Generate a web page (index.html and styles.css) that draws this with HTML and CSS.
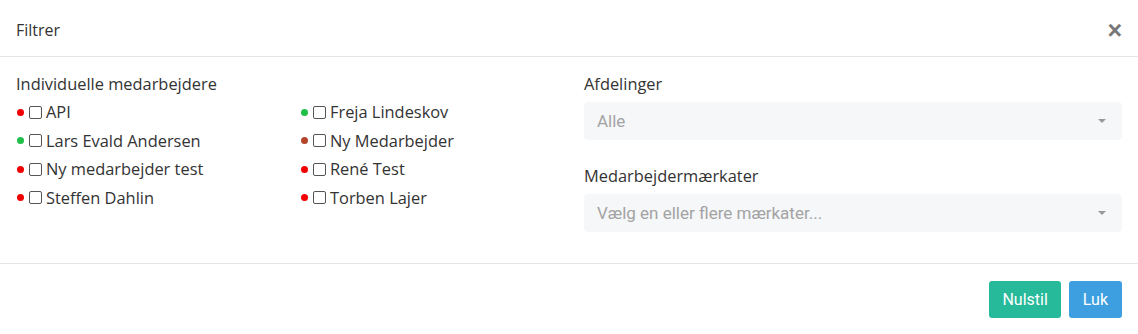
FILE: index.html
```html
<!DOCTYPE html>
<html lang="da">

<head>
  <meta charset="UTF-8">
  <meta name="viewport" content="width=device-width, initial-scale=1.0">
  <title>Filtrer</title>

  <link rel="stylesheet" href="styles.css">
</head>

<body>
  <div class="modal">
    <div class="modal__header">
      <h4 class="modal__title">Filtrer</h4>
      <button class="modal__close" type="button">&times;</button>
    </div>

    <div class="modal__body">
      <div class="filter__group filter__group--employees">
        <div class="filter__label">Individuelle medarbejdere</div>
        <div class="employee__list">
          <label class="employee"><span class="employee__dot dot--red"></span><input type="checkbox"> API</label>
          <label class="employee"><span class="employee__dot dot--green"></span><input type="checkbox"> Freja Lindeskov</label>
          <label class="employee"><span class="employee__dot dot--green"></span><input type="checkbox"> Lars Evald Andersen</label>
          <label class="employee"><span class="employee__dot dot--brown"></span><input type="checkbox"> Ny Medarbejder</label>
          <label class="employee"><span class="employee__dot dot--red"></span><input type="checkbox"> Ny medarbejder test</label>
          <label class="employee"><span class="employee__dot dot--red"></span><input type="checkbox"> René Test</label>
          <label class="employee"><span class="employee__dot dot--red"></span><input type="checkbox"> Steffen Dahlin</label>
          <label class="employee"><span class="employee__dot dot--red"></span><input type="checkbox"> Torben Lajer</label>
        </div>
      </div>

      <div class="filter__group filter__group--selects">
        <div class="form__item">
          <div class="filter__label">Afdelinger</div>
          <div class="select">
            <span class="select__placeholder">Alle</span>
            <span class="select__caret"></span>
          </div>
        </div>
        <div class="form__item">
          <div class="filter__label">Medarbejdermærkater</div>
          <div class="select">
            <span class="select__placeholder">Vælg en eller flere mærkater...</span>
            <span class="select__caret"></span>
          </div>
        </div>
      </div>
    </div>

    <div class="modal__footer">
      <button class="btn btn--reset" type="button">Nulstil</button>
      <button class="btn btn--close" type="button">Luk</button>
    </div>
  </div>
</body>

</html>
```

FILE: styles.css
```css
* {
  box-sizing: border-box;
}

body {
  margin: 0;
  background: #fff;
  font-family: "Open Sans", "Liberation Sans", sans-serif;
  color: #2b2b2b;
}

.modal {
  width: 1138px;
  height: 334px;
  display: flex;
  flex-direction: column;
  background: #fff;
}

.modal__header {
  display: flex;
  align-items: center;
  justify-content: space-between;
  height: 57px;
  padding: 3px 16px 0;
  border-bottom: 1px solid #e5e5e5;
}

.modal__title {
  margin: 0;
  font-size: 16px;
  font-weight: 400;
  color: #333;
}

.modal__close {
  border: 0;
  background: none;
  padding: 0;
  margin-top: 1px;
  font-family: "Liberation Sans", sans-serif;
  font-size: 25px;
  font-weight: 700;
  line-height: 1;
  color: #777;
  cursor: pointer;
}

.modal__body {
  display: flex;
  gap: 30px;
  height: 207px;
  padding: 16px 16px 0;
  border-bottom: 1px solid #e5e5e5;
}

.filter__group {
  flex: 1;
}

.filter__label {
  font-size: 16.4px;
  line-height: 22px;
  color: #333;
  margin-bottom: 6px;
}

.employee__list {
  display: grid;
  grid-template-columns: 284px 1fr;
  row-gap: 6.5px;
}

.employee {
  display: flex;
  align-items: center;
  font-size: 16.4px;
  line-height: 22px;
  color: #333;
}

.employee__dot {
  width: 7px;
  height: 7px;
  border-radius: 50%;
  margin: 0 5px 0 1px;
}

.dot--red {
  background: #f20000;
}

.dot--green {
  background: #1fbf4a;
}

.dot--brown {
  background: #b5452a;
}

.employee input {
  -webkit-appearance: none;
  appearance: none;
  width: 13px;
  height: 13px;
  margin: 0 4px 0 0;
  border: 1px solid #555;
  border-radius: 2px;
  background: #fff;
}

.form__item {
  margin-bottom: 25px;
}

.form__item .filter__label {
  margin-bottom: 7px;
}

.select {
  display: flex;
  align-items: center;
  justify-content: space-between;
  height: 38px;
  padding: 0 16px 0 13px;
  border-radius: 4px;
  background: #f6f7f9;
  font-family: Roboto, "Liberation Sans", sans-serif;
  font-size: 17px;
  color: #a3a3a3;
}

.select__caret {
  width: 0;
  height: 0;
  border-left: 4px solid transparent;
  border-right: 4px solid transparent;
  border-top: 4px solid #999;
}

.modal__footer {
  display: flex;
  justify-content: flex-end;
  align-items: center;
  gap: 8px;
  flex: 1;
  padding: 0 16px;
}

.btn {
  height: 37px;
  padding: 0 13px;
  border: 0;
  border-radius: 3px;
  font-family: Roboto, "Liberation Sans", sans-serif;
  font-size: 16px;
  color: #fff;
  cursor: pointer;
}

.btn--reset {
  background: #26b99a;
}

.btn--close {
  padding: 0 14px;
  background: #3d9fe0;
}
```
